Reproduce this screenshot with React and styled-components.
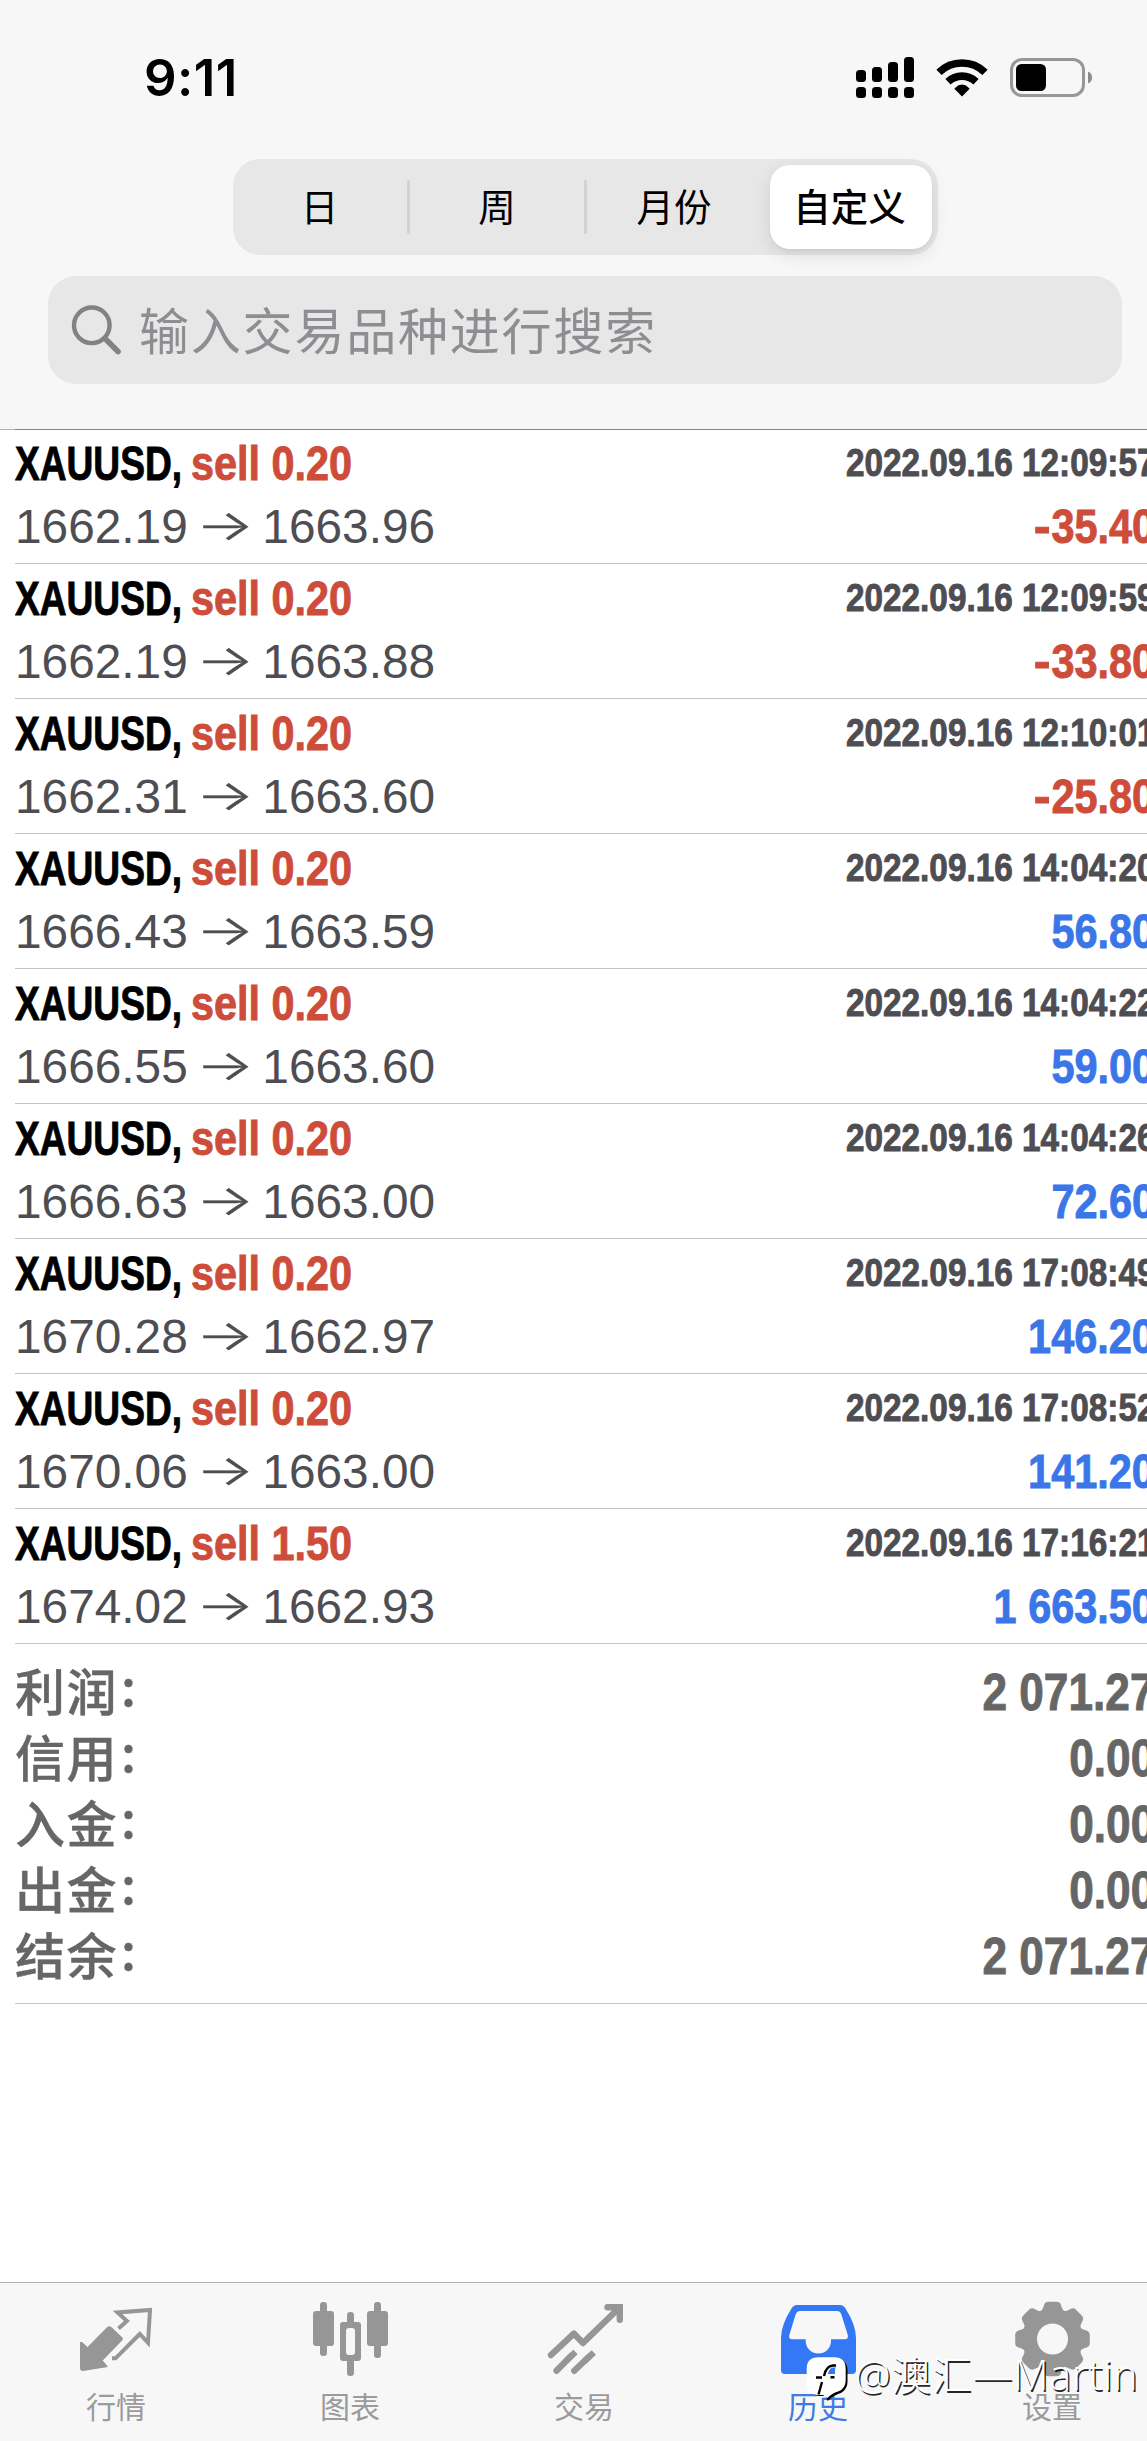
import styled, { createGlobalStyle, css } from "styled-components";

const deals = [
    { volume: "0.20", open: "1662.19", close: "1663.96", time: "2022.09.16 12:09:57", profit: "-35.40" },
    { volume: "0.20", open: "1662.19", close: "1663.88", time: "2022.09.16 12:09:59", profit: "-33.80" },
    { volume: "0.20", open: "1662.31", close: "1663.60", time: "2022.09.16 12:10:01", profit: "-25.80" },
    { volume: "0.20", open: "1666.43", close: "1663.59", time: "2022.09.16 14:04:20", profit: "56.80" },
    { volume: "0.20", open: "1666.55", close: "1663.60", time: "2022.09.16 14:04:22", profit: "59.00" },
    { volume: "0.20", open: "1666.63", close: "1663.00", time: "2022.09.16 14:04:26", profit: "72.60" },
    { volume: "0.20", open: "1670.28", close: "1662.97", time: "2022.09.16 17:08:49", profit: "146.20" },
    { volume: "0.20", open: "1670.06", close: "1663.00", time: "2022.09.16 17:08:52", profit: "141.20" },
    { volume: "1.50", open: "1674.02", close: "1662.93", time: "2022.09.16 17:16:21", profit: "1 663.50" },
]

const totals = [
    ["利润", "2 071.27"],
    ["信用", "0.00"],
    ["入金", "0.00"],
    ["出金", "0.00"],
    ["结余", "2 071.27"],
]

const periods = ["日", "周", "月份", "自定义"]

function SignalIcon() {
    const tops = [13, 10, 5, 0]
    return (
        <svg width="58" height="41" viewBox="0 0 58 41">
            {tops.map((y, i) => (
                <g key={y}>
                    <rect x={i * 16} y={y} width="10" height={25 - y} rx="3.5" />
                    <rect x={i * 16} y="30" width="10" height="11" rx="3.5" />
                </g>
            ))}
        </svg>
    )
}

function WifiIcon() {
    return (
        <svg width="52" height="38" viewBox="0 0 52 38">
            <path d="M3 13.4A33 33 0 0 1 49 13.4" fill="none" stroke="#000" strokeWidth="7.6" />
            <path d="M12 22.8A20.2 20.2 0 0 1 40 22.8" fill="none" stroke="#000" strokeWidth="7.6" />
            <path d="M26 37.4L18.6 30Q18.4 29.4 19 28.9Q26 22.3 33 28.9Q33.6 29.4 33.4 30Z" />
        </svg>
    )
}

function BatteryIcon() {
    return (
        <svg width="83" height="39" viewBox="0 0 83 39">
            <rect x="1.5" y="1.5" width="72" height="36" rx="10.5" fill="none" stroke="#979797" strokeWidth="3" />
            <rect x="6" y="6" width="30" height="27" rx="5.5" />
            <path d="M78 13.5Q82 15 82 19.5Q82 24 78 25.5Z" fill="#8c8c8c" />
        </svg>
    )
}

function SearchIcon() {
    return (
        <svg width="50" height="50" viewBox="0 0 50 50" fill="none" stroke="#828286" strokeLinecap="round">
            <circle cx="20.8" cy="20.3" r="17.8" strokeWidth="4.4" />
            <path d="M34 33.5L47 46.5" strokeWidth="5.6" />
        </svg>
    )
}

function QuotesIcon() {
    return (
        <svg width="75" height="77" viewBox="0 0 75 77">
            <path d="M1 42H3L8.5 47L28 27.3Q30.3 25 32.6 27.3L43.4 37.6Q44.6 39 43.4 40.3L23.7 60.6L28.5 66Q28.6 67 27.5 67.3L4 71Q1 71 1 68Z" fill="#969696" />
            <path d="M39.5 28.5L47.9 21L38.5 12.4L71 10L69 42.8L60.8 34L36.5 58.3H33" fill="none" stroke="#969696" strokeWidth="4" />
        </svg>
    )
}

function ChartIcon() {
    return (
        <svg width="77" height="77" viewBox="0 0 77 77" fill="#969696">
            <rect x="8" y="2" width="7" height="54" rx="3.2" />
            <rect x="1" y="11" width="21" height="35" rx="3" />
            <rect x="35" y="12" width="7" height="64" rx="3.2" />
            <rect x="28" y="22" width="21" height="39" rx="3" />
            <rect x="34" y="28" width="9" height="27" rx="3" fill="#f7f7f7" />
            <rect x="62" y="2" width="7" height="56" rx="3.2" />
            <rect x="55" y="11" width="21" height="35" rx="3" />
        </svg>
    )
}

function TradeIcon() {
    return (
        <svg width="77" height="77" viewBox="0 0 77 77" fill="none" stroke="#969696" strokeWidth="6.4" strokeLinecap="round">
            <path d="M5 55L27.8 33.6L37 43L73 8" strokeLinejoin="round" />
            <path d="M61.5 7.2H73.8V19.7" />
            <path d="M10.5 70.8L25 56" />
            <path d="M28.3 70.8L43 56.8" />
            <path d="M20 61L29.5 52M38 61.5L47.8 52.5" strokeLinecap="butt" />
        </svg>
    )
}

function HistoryIcon() {
    return (
        <svg width="77" height="77" viewBox="0 0 77 77">
            <path
                fill="#3478f6"
                fillRule="evenodd"
                d="M17 5H60Q63.5 5 65.5 8.5Q76 25 76 38V70Q76 74 72 74H5Q1 74 1 70V38Q1 25 11.5 8.5Q13.5 5 17 5Z
                M20 11Q17 11 15.8 14L9.3 35Q8.6 39.3 12 39.3H25.7V42A12.7 12.7 0 0 0 51 42V39.3H65Q68.5 39.3 67.8 35L61.2 14Q60 11 57 11Z"
            />
        </svg>
    )
}

function SettingsIcon() {
    return (
        <svg width="77" height="77" viewBox="-38.5 -39 77 77">
            {[0, 45, 90, 135, 180, 225, 270, 315].map((angle) => (
                <path
                    key={angle}
                    transform={`rotate(${angle})`}
                    d="M-14 -25Q-9.5 -29 -8.5 -34Q-7.5 -37.3 -4 -37.3H4Q7.5 -37.3 8.5 -34Q9.5 -29 14 -25Z"
                    fill="#969696"
                />
            ))}
            <circle r="23" fill="none" stroke="#969696" strokeWidth="15" />
        </svg>
    )
}

function WatermarkLogo() {
    return (
        <svg width="46" height="48" viewBox="0 0 46 48">
            <path d="M14 4H31Q42.5 4 42.5 16V27Q42.5 34 36 38Q29 40 22.5 46L21 41H15Q4 41 4 30V16Q4 4 14 4Z" fill="#000" />
            <path d="M13 2.3H29.5Q40.7 2.3 40.7 14V25Q40.7 34 33 36.5Q27 38 22.5 43L18 40H13Q1.7 40 1.7 29V14Q1.7 2.3 13 2.3Z" fill="#fff" />
            <path d="M31 12.5H28Q24 13 23 19H30V14Z" fill="#3478f6" />
            <path d="M31 10.5H28Q21 11 19 21M11 22.5H17M17 27L13.5 39.5M25.5 22.3H29.5" fill="none" stroke="#000" strokeWidth="2.4" />
        </svg>
    )
}

const tabs = [
    { label: "行情", Icon: QuotesIcon },
    { label: "图表", Icon: ChartIcon },
    { label: "交易", Icon: TradeIcon },
    { label: "历史", Icon: HistoryIcon, active: true },
    { label: "设置", Icon: SettingsIcon },
]

function App() {
    return (
        <Viewport>
            <GlobalStyle />
            <Screen>
                <Header>
                    <StatusBar>
                        <Clock>9:11</Clock>
                        <StatusIcons>
                            <SignalIcon />
                            <WifiIcon />
                            <BatteryIcon />
                        </StatusIcons>
                    </StatusBar>
                    <Segments>
                        {periods.map((name, i) => (
                            <Segment key={name} $selected={i === 3} $divided={i < 2}>{name}</Segment>
                        ))}
                    </Segments>
                    <SearchBox>
                        <SearchIcon />
                        <Placeholder>输入交易品种进行搜索</Placeholder>
                    </SearchBox>
                </Header>

                <DealList>
                    {deals.map((deal) => {
                        const loss = deal.profit.startsWith("-")
                        return (
                            <Deal key={deal.time}>
                                <DealLine $height={67}>
                                    <Title>
                                        <Symbol>XAUUSD,</Symbol>
                                        <Side>sell {deal.volume}</Side>
                                    </Title>
                                    <Time>{deal.time}</Time>
                                </DealLine>
                                <DealLine $height={59}>
                                    <Prices>{deal.open} <Arrow>→</Arrow> {deal.close}</Prices>
                                    <Profit $loss={loss}>
                                        {loss && <Minus>-</Minus>}
                                        {deal.profit.replace("-", "")}
                                    </Profit>
                                </DealLine>
                            </Deal>
                        )
                    })}
                </DealList>

                <Totals>
                    {totals.map(([label, value]) => (
                        <TotalRow key={label}>
                            <TotalLabel>{label}<Colon>:</Colon></TotalLabel>
                            <TotalValue>{value}</TotalValue>
                        </TotalRow>
                    ))}
                </Totals>

                <TabBar>
                    {tabs.map(({ label, Icon, active }) => (
                        <Tab key={label} $active={active}>
                            <Icon />
                            <span>{label}</span>
                        </Tab>
                    ))}
                </TabBar>
            </Screen>
            <Watermark>
                <WatermarkLogo />
                <WatermarkText>@澳汇—<b>Martin</b></WatermarkText>
            </Watermark>
        </Viewport>
    )
}
export default App;

const GlobalStyle = createGlobalStyle`
*{
    box-sizing: border-box;
}
body{
    margin: 0;
    background: #fff;
}
svg{
    display: block;
    flex: none;
}
`;

const cjk = css`
font-family: "Noto Sans CJK SC", sans-serif;
`;

/* Helvetica Condensed look out of the regular bold cut */
const condensed = css`
display: inline-block;
font-family: "Liberation Sans", Arial, sans-serif;
font-weight: 700;
white-space: pre;
-webkit-text-stroke: 0.9px currentColor;
`;

const Viewport = styled.div`
position: relative;
width: 1147px;
height: 2441px;
overflow: hidden;
`;

const Screen = styled.div`
display: flex;
flex-direction: column;
width: 1170px;
height: 2441px;
background: #fff;
`;

const Header = styled.header`
display: flex;
flex-direction: column;
flex: none;
height: 430px;
background: #f7f7f7;
border-bottom: 1px solid #b2b2b2;
`;

const StatusBar = styled.div`
display: flex;
justify-content: space-between;
align-items: center;
height: 159px;
padding: 0 77px 4px 144px;
`;

const Clock = styled.div`
font-family: Inter, sans-serif;
font-weight: 600;
font-size: 51px;
line-height: 60px;
letter-spacing: 0.4px;
color: #000;
`;

const StatusIcons = styled.div`
display: flex;
align-items: center;
gap: 22px;
`;

const Segments = styled.div`
display: flex;
align-self: center;
width: 705px;
height: 96px;
padding: 6px;
border-radius: 27px;
background: #e7e7e7;
`;

const Segment = styled.div`
${cjk}
display: flex;
align-items: center;
justify-content: center;
position: relative;
width: ${props => props.$selected ? "162px" : "177px"};
flex: none;
padding: 0 2px 5px 0;
font-size: 37.5px;
color: #000;

&:first-child{
    width: 171px;
    padding-right: 9px;
}

${props => props.$divided && css`
    &::after{
        content: "";
        position: absolute;
        right: 0;
        top: 15px;
        width: 3px;
        height: 54px;
        border-radius: 2px;
        background: #d2d2d2;
    }
`}

${props => props.$selected && css`
    margin-left: 6px;
    font-weight: 500;
    border-radius: 20px;
    background: #fff;
    box-shadow: 0 6px 18px rgba(0,0,0,0.1), 0 2px 3px rgba(0,0,0,0.04);
`}
`;

const SearchBox = styled.div`
display: flex;
align-items: center;
gap: 18px;
height: 108px;
margin: 21px 48px 0;
padding-left: 23px;
border-radius: 28px;
background: #e7e7e7;
`;

const Placeholder = styled.span`
${cjk}
margin-bottom: 5px;
font-size: 50px;
font-weight: 400;
letter-spacing: 1.8px;
line-height: 70px;
color: #8e8e92;
`;

const DealList = styled.main`
margin: -1px 0 0 15px;
`;

const Deal = styled.section`
display: flex;
flex-direction: column;
height: 135px;
padding: 1px 15px 0 0;
border-top: 1px solid rgba(0,0,0,0.24);

&:first-child{
    height: 134px;
    padding-top: 0;
}
`;

const DealLine = styled.div`
display: flex;
flex: none;
justify-content: space-between;
align-items: center;
height: ${props => props.$height}px;
`;

const Title = styled.div`
display: flex;
font-size: 48px;
line-height: 56px;
`;

const Symbol = styled.span`
${condensed}
width: 176px;
transform: scaleX(0.773);
transform-origin: left;
color: #000;
`;

const Side = styled.span`
${condensed}
transform: scaleX(0.862);
transform-origin: left;
color: #cd4c3a;
`;

const Time = styled.span`
${condensed}
margin-bottom: 2px;
font-size: 38.5px;
line-height: 44px;
transform: scaleX(0.866);
transform-origin: right;
color: #4d4d52;
`;

const Prices = styled.span`
font-family: "Liberation Sans", Arial, sans-serif;
font-size: 47.8px;
line-height: 56px;
white-space: pre;
color: #4d4d52;
`;

const Arrow = styled.span`
display: inline-block;
width: 48px;
font-family: Inter, sans-serif;
font-size: 42px;
font-weight: 300;
text-align: center;
line-height: 50px;
transform: translateY(-3px) scaleX(1.45);
-webkit-text-stroke: 0.4px currentColor;
`;

const Profit = styled.span`
${condensed}
font-size: 48px;
line-height: 56px;
transform: scaleX(0.863);
transform-origin: right;
color: ${props => props.$loss ? "#cd4c3a" : "#3a76e8"};
`;

const Minus = styled.span`
display: inline-block;
transform: scaleX(1.22);
transform-origin: right;
margin-right: 1px;
`;

const Totals = styled.section`
flex: none;
height: 361px;
margin-left: 15px;
padding: 16px 15px 0 0;
border-top: 1px solid #c6c6c6;
border-bottom: 1px solid #c6c6c6;
`;

const TotalRow = styled.div`
display: flex;
justify-content: space-between;
align-items: center;
height: 66px;
color: #666;
`;

const TotalLabel = styled.span`
${cjk}
margin-bottom: 8px;
font-size: 50px;
font-weight: 500;
letter-spacing: 1.5px;
line-height: 66px;
-webkit-text-stroke: 0.4px currentColor;
`;

const Colon = styled.span`
display: inline-block;
margin-left: 3px;
transform: translateY(-5px);
`;

const TotalValue = styled.span`
${condensed}
font-size: 51px;
line-height: 60px;
transform: scaleX(0.867);
transform-origin: right;
`;

const TabBar = styled.nav`
display: flex;
width: 1170px;
height: 159px;
margin-top: auto;
border-top: 1px solid #b2b2b2;
background: #f7f7f7;
`;

const Tab = styled.div`
${cjk}
display: flex;
flex-direction: column;
align-items: center;
flex: 1;
padding: 17px 2px 0 0;
font-size: 30px;
line-height: 44px;
color: ${props => props.$active ? "#3f7be6" : "#9b9b9b"};

span{
    margin-top: 6px;
}
`;

const Watermark = styled.div`
position: absolute;
left: 805px;
top: 2355px;
display: flex;
align-items: center;
gap: 4px;
`;

const WatermarkText = styled.span`
margin-top: -9px;
font-family: "Open Sans", "Noto Sans CJK SC", sans-serif;
font-size: 40px;
font-weight: 300;
line-height: 48px;
letter-spacing: 0.6px;
white-space: nowrap;
color: #fff;
text-shadow: 1.5px 1.5px 0 rgba(0,0,0,0.85);

b{
    font-size: 41.5px;
    font-weight: 300;
}
`;
